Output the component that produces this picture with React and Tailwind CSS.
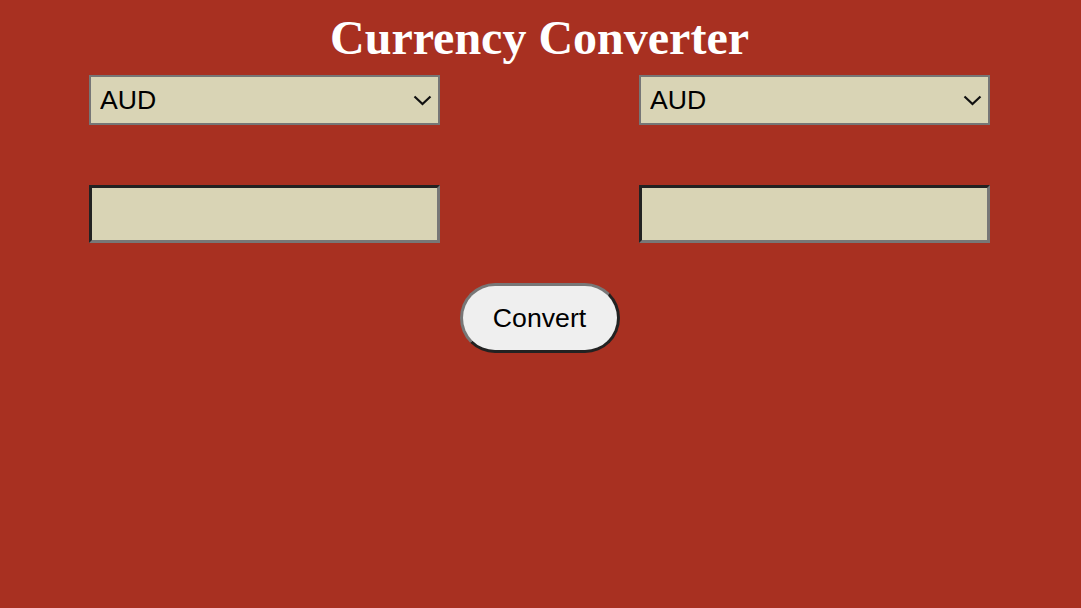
import React, { useState } from "react";

const currencies = ["AUD", "CAD", "EUR", "GBP", "INR", "JPY", "USD"];

function CurrencySelect({ value, onChange }) {
  return (
    <div className="relative h-[50px] w-[351px]">
      <select
        value={value}
        onChange={(e) => onChange(e.target.value)}
        className="h-full w-full appearance-none border-2 border-solid border-[#767676] bg-[#d9d4b5] pl-[9px] text-[26.67px] text-black outline-none"
        style={{ fontFamily: '"Liberation Sans", Arial, sans-serif' }}
      >
        {currencies.map((c) => (
          <option key={c} value={c}>
            {c}
          </option>
        ))}
      </select>
      {/* chevron */}
      <svg
        className="pointer-events-none absolute right-[8px] top-[20px] h-[11px] w-[19px]"
        viewBox="0 0 19 11"
        fill="none"
        stroke="#111"
        strokeWidth="2.2"
        aria-hidden
      >
        <path d="M1.5 1.5 L9.5 9 L17.5 1.5" />
      </svg>
    </div>
  );
}

function AmountInput({ value, onChange }) {
  return (
    <input
      type="text"
      value={value}
      onChange={(e) => onChange(e.target.value)}
      className="h-[58px] w-[351px] border-[3px] border-solid border-t-[#222] border-l-[#222] border-b-[#777] border-r-[#777] bg-[#d9d4b5] px-2 text-[26.67px] outline-none"
      style={{ fontFamily: '"Liberation Sans", Arial, sans-serif' }}
    />
  );
}

export default function App() {
  const [from, setFrom] = useState("AUD");
  const [to, setTo] = useState("AUD");
  const [amount, setAmount] = useState("");
  const [result, setResult] = useState("");

  return (
    <div
      className="min-h-screen bg-[#a83021] pr-[2px]"
      style={{ fontFamily: '"Liberation Sans", Arial, sans-serif' }}
    >
      <h1
        className="text-center text-[48px] font-bold leading-[75px] text-white"
        style={{ fontFamily: '"Liberation Serif", "Times New Roman", serif' }}
      >
        Currency Converter
      </h1>

      <div className="mx-auto flex w-[901px] justify-between">
        <CurrencySelect value={from} onChange={setFrom} />
        <CurrencySelect value={to} onChange={setTo} />
      </div>

      <div className="mx-auto mt-[60px] flex w-[901px] justify-between">
        <AmountInput value={amount} onChange={setAmount} />
        <AmountInput value={result} onChange={setResult} />
      </div>

      <div className="mt-[40px] flex justify-center">
        <button
          type="button"
          onClick={() => setResult(amount)}
          className="h-[70px] w-[160px] rounded-full border-[3px] border-solid border-t-[#777] border-l-[#777] border-b-[#222] border-r-[#222] bg-[#efefef] text-[26.67px] text-black"
        >
          Convert
        </button>
      </div>
    </div>
  );
}
